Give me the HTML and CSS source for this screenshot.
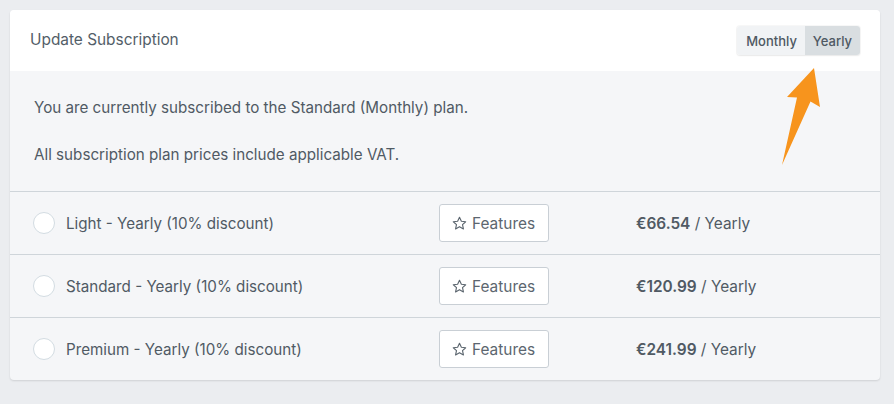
FILE: index.html
```html
<!DOCTYPE html>
<html>
<head>
<meta charset="utf-8">
<link rel="stylesheet" href="styles.css">
</head>
<body>
<div class="card">
  <div class="card-header">
    <div class="title">Update Subscription</div>
    <div class="toggle">
      <span class="seg">Monthly</span>
      <span class="seg active">Yearly</span>
    </div>
  </div>
  <div class="intro">
    <p>You are currently subscribed to the Standard (Monthly) plan.</p>
    <p>All subscription plan prices include applicable VAT.</p>
  </div>
  <div class="plans">
    <div class="plan">
      <div class="plan-name"><span class="radio"></span>Light - Yearly (10% discount)</div>
      <div><button class="btn"><svg class="star" viewBox="0 0 16 16" width="15" height="15"><path d="M8 1.3l2 4.3 4.6.5-3.4 3.1 1 4.6L8 11.4l-4.2 2.4 1-4.6L1.4 6.1 6 5.6z" fill="none" stroke="#5c666f" stroke-width="1.2" stroke-linejoin="round"/></svg>Features</button></div>
      <div class="price"><b>€66.54</b> / Yearly</div>
    </div>
    <div class="plan">
      <div class="plan-name"><span class="radio"></span>Standard - Yearly (10% discount)</div>
      <div><button class="btn"><svg class="star" viewBox="0 0 16 16" width="15" height="15"><path d="M8 1.3l2 4.3 4.6.5-3.4 3.1 1 4.6L8 11.4l-4.2 2.4 1-4.6L1.4 6.1 6 5.6z" fill="none" stroke="#5c666f" stroke-width="1.2" stroke-linejoin="round"/></svg>Features</button></div>
      <div class="price"><b>€120.99</b> / Yearly</div>
    </div>
    <div class="plan">
      <div class="plan-name"><span class="radio"></span>Premium - Yearly (10% discount)</div>
      <div><button class="btn"><svg class="star" viewBox="0 0 16 16" width="15" height="15"><path d="M8 1.3l2 4.3 4.6.5-3.4 3.1 1 4.6L8 11.4l-4.2 2.4 1-4.6L1.4 6.1 6 5.6z" fill="none" stroke="#5c666f" stroke-width="1.2" stroke-linejoin="round"/></svg>Features</button></div>
      <div class="price"><b>€241.99</b> / Yearly</div>
    </div>
  </div>
  <svg class="arrow" width="50" height="110" viewBox="770 60 50 110">
    <path d="M814 68 L787 97 L797 97.5 L782 165 L810.5 101.5 L820 107 Z" fill="#f7941d"/>
  </svg>
</div>
</body>
</html>
```

FILE: styles.css
```css
* { box-sizing: border-box; }
html, body { margin: 0; padding: 0; }
body {
  background: #ebedf0;
  padding: 10px;
  font-family: Inter, "Noto Sans", sans-serif;
  color: #505a64;
  font-size: 15.2px;
}
.card {
  position: relative;
  width: 870px;
  background: #f5f6f8;
  border-radius: 4px;
  box-shadow: 0 1px 2px rgba(0,0,0,0.12);
  overflow: hidden;
}
.card-header {
  background: #fff;
  height: 61px;
  padding: 0 20px;
  display: flex;
  align-items: center;
  justify-content: space-between;
}
.title { font-size: 15.4px; color: #535e68; padding-bottom: 3px; }
.toggle {
  display: flex;
  height: 29px;
  border-radius: 3px;
  overflow: hidden;
  box-shadow: 0 0 0 1px rgba(0,0,0,0.03), 0 1px 2px rgba(0,0,0,0.06);
}
.seg {
  display: flex;
  align-items: center;
  padding: 0 8px 0 9px;
  font-size: 13px;
  font-weight: 500;
  color: #4e5862;
  background: #f1f3f5;
}
.seg.active { background: #d9dee1; padding: 0 8px; }
.intro {
  padding: 25px 24px 24px;
  display: flex;
  flex-direction: column;
  gap: 23px;
}
.intro p { margin: 0; line-height: 24px; }
.plan {
  display: grid;
  grid-template-columns: 406px 197px 1fr;
  align-items: center;
  height: 63px;
  border-top: 1px solid #cfd5da;
  padding-left: 23px;
}
.plan-name { display: flex; align-items: center; gap: 11px; }
.radio {
  width: 22px;
  height: 22px;
  border-radius: 50%;
  background: #fff;
  border: 1px solid #d3dce2;
}
.btn {
  display: flex;
  align-items: center;
  gap: 5px;
  width: 110px;
  height: 38px;
  padding: 0 0 0 12px;
  background: #fff;
  border: 1px solid #c9cfd5;
  border-radius: 3px;
  font-family: inherit;
  font-size: 15.4px;
  color: #5c666f;
}
.price { font-size: 15.4px; }
.price b { font-weight: 600; }
.arrow { position: absolute; left: 760px; top: 50px; }
```
